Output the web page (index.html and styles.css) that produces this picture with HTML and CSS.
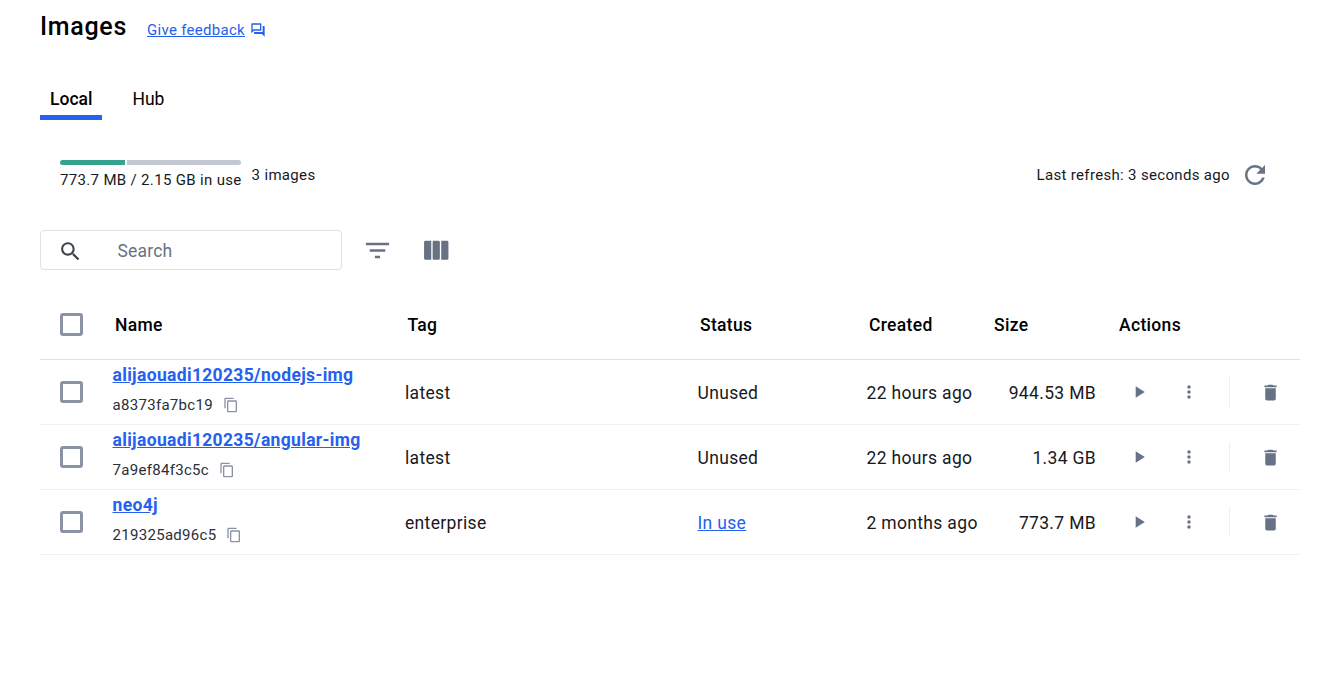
FILE: index.html
```html
<!DOCTYPE html>
<html lang="en">
<head>
  <meta charset="UTF-8">
  <meta name="viewport" content="width=device-width, initial-scale=1.0">
  <title>Images</title>
  <link rel="stylesheet" href="styles.css">
</head>
<body>
  <svg class="defs" width="0" height="0">
    <symbol id="i-search" viewBox="0 0 24 24"><path d="M15.5 14h-.79l-.28-.27C15.41 12.59 16 11.11 16 9.5 16 5.91 13.09 3 9.5 3S3 5.91 3 9.5 5.91 16 9.5 16c1.61 0 3.09-.59 4.23-1.57l.27.28v.79l5 4.99L20.49 19l-4.99-5zm-6 0C7.01 14 5 11.99 5 9.5S7.01 5 9.5 5 14 7.01 14 9.5 11.99 14 9.5 14z"/></symbol>
    <symbol id="i-filter" viewBox="0 0 24 24"><path d="M10 18h4v-2h-4v2zM3 6v2h18V6H3zm3 7h12v-2H6v2z"/></symbol>
    <symbol id="i-columns" viewBox="0 0 24 24"><path d="M14.67 6v12a1 1 0 0 1-1 1h-3.34a1 1 0 0 1-1-1V6a1 1 0 0 1 1-1h3.34a1 1 0 0 1 1 1zm1 13H20a1 1 0 0 0 1-1V6a1 1 0 0 0-1-1h-4.33v14zm-7.34 0V5H4a1 1 0 0 0-1 1v12a1 1 0 0 0 1 1h4.33z"/></symbol>
    <symbol id="i-refresh" viewBox="0 0 24 24"><path d="M17.65 6.35C16.2 4.9 14.21 4 12 4c-4.42 0-7.99 3.58-7.99 8s3.57 8 7.99 8c3.73 0 6.84-2.55 7.73-6h-2.08c-.82 2.33-3.04 4-5.65 4-3.31 0-6-2.69-6-6s2.69-6 6-6c1.66 0 3.14.69 4.22 1.78L13 11h7V4l-2.35 2.35z"/></symbol>
    <symbol id="i-play" viewBox="0 0 24 24"><path d="M8 5v14l11-7z"/></symbol>
    <symbol id="i-more" viewBox="0 0 24 24"><path d="M12 8c1.1 0 2-.9 2-2s-.9-2-2-2-2 .9-2 2 .9 2 2 2zm0 2c-1.1 0-2 .9-2 2s.9 2 2 2 2-.9 2-2-.9-2-2-2zm0 6c-1.1 0-2 .9-2 2s.9 2 2 2 2-.9 2-2-.9-2-2-2z"/></symbol>
    <symbol id="i-delete" viewBox="0 0 24 24"><path d="M6 19c0 1.1.9 2 2 2h8c1.1 0 2-.9 2-2V7H6v12zM19 4h-3.5l-1-1h-5l-1 1H5v2h14V4z"/></symbol>
    <symbol id="i-copy" viewBox="0 0 24 24"><path d="M16 1H4c-1.1 0-2 .9-2 2v14h2V3h12V1zm3 4H8c-1.1 0-2 .9-2 2v14c0 1.1.9 2 2 2h11c1.1 0 2-.9 2-2V7c0-1.1-.9-2-2-2zm0 16H8V7h11v14z"/></symbol>
    <symbol id="i-forum" viewBox="0 0 24 24"><path d="M15 4v7H5.17L4 12.17V4h11m1-2H3c-.55 0-1 .45-1 1v14l4-4h10c.55 0 1-.45 1-1V3c0-.55-.45-1-1-1zm5 4h-2v9H6v2c0 .55.45 1 1 1h11l4 4V7c0-.55-.45-1-1-1z"/></symbol>
  </svg>

  <div class="page">
    <div class="title-row">
      <h1>Images</h1>
      <a class="feedback" href="#">Give feedback</a>
      <svg class="icon icon-forum"><use href="#i-forum"/></svg>
    </div>

    <div class="tabs">
      <a class="tab active" href="#">Local</a>
      <a class="tab" href="#">Hub</a>
    </div>

    <div class="usage-row">
      <div class="usage">
        <div class="bar">
          <div class="bar-used"></div>
          <div class="bar-free"></div>
        </div>
        <div class="usage-text">773.7 MB / 2.15 GB in use</div>
      </div>
      <div class="count">3 images</div>
      <div class="refresh">
        <span>Last refresh: 3 seconds ago</span>
        <svg class="icon icon-refresh"><use href="#i-refresh"/></svg>
      </div>
    </div>

    <div class="toolbar">
      <div class="search">
        <svg class="icon icon-search"><use href="#i-search"/></svg>
        <span class="placeholder">Search</span>
      </div>
      <svg class="icon icon-filter"><use href="#i-filter"/></svg>
      <svg class="icon icon-columns"><use href="#i-columns"/></svg>
    </div>

    <div class="table">
      <div class="row head">
        <div class="cell-check"><span class="checkbox"></span></div>
        <div>Name</div>
        <div>Tag</div>
        <div>Status</div>
        <div>Created</div>
        <div>Size</div>
        <div>Actions</div>
      </div>

      <div class="row">
        <div class="cell-check"><span class="checkbox"></span></div>
        <div class="name">
          <a href="#">alijaouadi120235/nodejs-img</a>
          <div class="hash">a8373fa7bc19<svg class="icon icon-copy"><use href="#i-copy"/></svg></div>
        </div>
        <div class="txt">latest</div>
        <div class="txt">Unused</div>
        <div class="txt">22 hours ago</div>
        <div class="txt size">944.53 MB</div>
        <div class="actions">
          <svg class="icon icon-play"><use href="#i-play"/></svg>
          <svg class="icon icon-more"><use href="#i-more"/></svg>
          <span class="sep"></span>
          <svg class="icon icon-delete"><use href="#i-delete"/></svg>
        </div>
      </div>

      <div class="row">
        <div class="cell-check"><span class="checkbox"></span></div>
        <div class="name">
          <a href="#">alijaouadi120235/angular-img</a>
          <div class="hash">7a9ef84f3c5c<svg class="icon icon-copy"><use href="#i-copy"/></svg></div>
        </div>
        <div class="txt">latest</div>
        <div class="txt">Unused</div>
        <div class="txt">22 hours ago</div>
        <div class="txt size">1.34 GB</div>
        <div class="actions">
          <svg class="icon icon-play"><use href="#i-play"/></svg>
          <svg class="icon icon-more"><use href="#i-more"/></svg>
          <span class="sep"></span>
          <svg class="icon icon-delete"><use href="#i-delete"/></svg>
        </div>
      </div>

      <div class="row">
        <div class="cell-check"><span class="checkbox"></span></div>
        <div class="name">
          <a href="#">neo4j</a>
          <div class="hash">219325ad96c5<svg class="icon icon-copy"><use href="#i-copy"/></svg></div>
        </div>
        <div class="txt">enterprise</div>
        <div class="txt"><a class="status-link" href="#">In use</a></div>
        <div class="txt">2 months ago</div>
        <div class="txt size">773.7 MB</div>
        <div class="actions">
          <svg class="icon icon-play"><use href="#i-play"/></svg>
          <svg class="icon icon-more"><use href="#i-more"/></svg>
          <span class="sep"></span>
          <svg class="icon icon-delete"><use href="#i-delete"/></svg>
        </div>
      </div>
    </div>
  </div>
</body>
</html>
```

FILE: styles.css
```css
html, body {
  margin: 0;
  padding: 0;
  background: #fff;
  font-family: Roboto, sans-serif;
  color: #17191e;
  overflow: hidden;
}
.defs {
  position: absolute;
}
.page {
  padding: 0 37px 0 40px;
}
.icon {
  display: block;
  fill: #677285;
  flex: none;
}
.title-row {
  display: flex;
  align-items: center;
  height: 52px;
}
h1 {
  margin: 0 20px 0 0;
  font-size: 25px;
  font-weight: 500;
  letter-spacing: .7px;
  color: #000;
}
.feedback {
  font-size: 15px;
  letter-spacing: .3px;
  color: #2560ee;
  margin-top: 8px;
}
.icon-forum {
  width: 16px;
  height: 16px;
  margin: 8px 0 0 4.5px;
  fill: #2560ee;
}
.tabs {
  display: flex;
  margin-top: 25px;
}
.tab {
  line-height: 20px;
  padding: 12px 10px 6px;
  margin-right: 20px;
  font-size: 17.5px;
  color: #000;
  text-decoration: none;
  border-bottom: 5px solid transparent;
}
.tab.active {
  border-bottom-color: #2560ee;
  font-weight: 480;
}
.usage-row {
  display: flex;
  align-items: center;
  margin: 40px 30px 0 20px;
  height: 30px;
  font-size: 15px;
  letter-spacing: .33px;
}
.usage {
  padding-bottom: 2px;
}
.bar {
  display: flex;
  gap: 2px;
  height: 5px;
  margin-bottom: 6px;
}
.bar-used {
  width: 65px;
  background: #36a18d;
  border-radius: 3px 0 0 3px;
}
.bar-free {
  width: 114px;
  background: #c2c7d1;
  border-radius: 0 3px 3px 0;
}
.count {
  margin-left: 10px;
}
.refresh {
  display: flex;
  align-items: center;
  gap: 10px;
  margin-left: auto;
}
.icon-refresh {
  width: 30px;
  height: 30px;
}
.toolbar {
  display: flex;
  align-items: center;
  margin-top: 40px;
}
.search {
  display: flex;
  align-items: center;
  box-sizing: border-box;
  width: 302px;
  height: 40px;
  border: 1px solid #dfe1e6;
  border-radius: 4px;
  padding: 2px 0 0 17px;
  font-size: 17.5px;
  letter-spacing: .2px;
  color: #677285;
}
.icon-search {
  width: 25px;
  height: 25px;
  fill: #3c4350;
  margin-right: 34.5px;
}
.icon-filter {
  width: 31px;
  height: 31px;
  margin-left: 19.5px;
}
.icon-columns {
  width: 32.5px;
  height: 32.5px;
  margin-left: 27.5px;
}
.table {
  margin-top: 30px;
}
.row {
  display: grid;
  grid-template-columns: 72px 292.5px 292.5px 169px 125px 125px 1fr;
  align-items: center;
  height: 65px;
  border-bottom: 1px solid #f0f1f3;
  box-sizing: border-box;
  font-size: 17.5px;
  letter-spacing: .33px;
}
.row.head {
  height: 60px;
  padding-bottom: 10px;
  border-bottom-color: #dfe1e6;
  font-weight: 480;
  color: #000;
}
.row.head > div:not(.cell-check) {
  padding-left: 3px;
}
.cell-check {
  padding-left: 20px;
}
.checkbox {
  display: block;
  box-sizing: border-box;
  width: 22.5px;
  height: 22.5px;
  border: 3px solid #8a93a6;
  border-radius: 3px;
}
.txt {
  padding: 2px 0 0 .5px;
}
.name {
  padding: 0 0 5px .5px;
}
.name a {
  display: block;
  color: #2560ee;
  font-weight: 700;
}
.hash {
  display: flex;
  align-items: center;
  margin-top: 11px;
  font-size: 15px;
  letter-spacing: .3px;
  color: #2b2f38;
}
.icon-copy {
  width: 16px;
  height: 16px;
  margin-left: 10px;
  fill: #8a93a6;
}
.status-link {
  color: #2560ee;
}
.size {
  text-align: right;
  padding-right: 20px;
}
.actions {
  display: flex;
  align-items: center;
  padding-left: 13px;
}
.icon-play {
  width: 20px;
  height: 20px;
}
.icon-more {
  width: 20px;
  height: 20px;
  margin-left: 30px;
}
.sep {
  width: 1px;
  height: 30px;
  background: #eceef1;
  margin: 0 29.5px 0 30px;
}
.icon-delete {
  width: 21px;
  height: 21px;
}
```
